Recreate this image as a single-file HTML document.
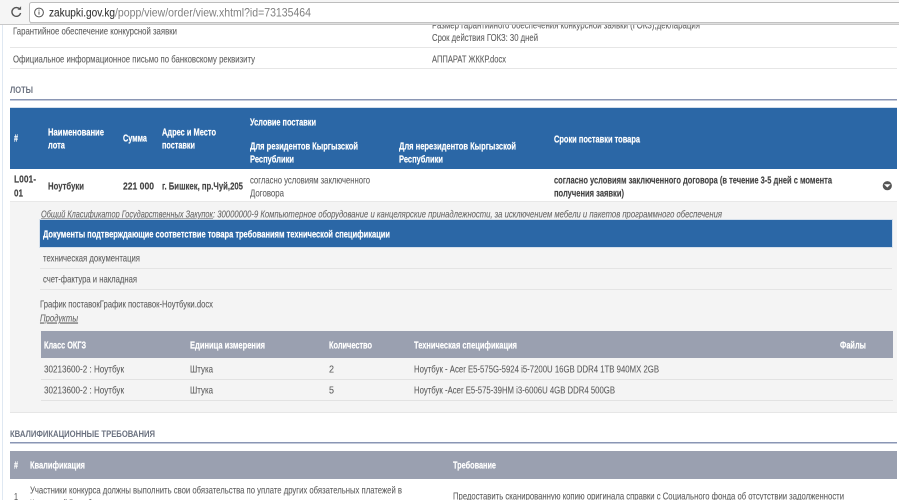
<!DOCTYPE html>
<html><head><meta charset="utf-8"><style>
html,body{margin:0;padding:0;background:#fff;width:899px;height:500px;overflow:hidden}
svg{display:block;position:absolute;left:0;top:0;filter:blur(.3px)}
text{font-family:"Liberation Sans",sans-serif;font-size:10.5px;fill:#5c5c5c;stroke:#5c5c5c;stroke-width:.08px}
.b{font-weight:bold;fill:#444;stroke:#444;stroke-width:.15px}
.w{font-weight:bold;fill:#fff;stroke:#fff;stroke-width:.2px}
.i{font-style:italic;fill:#666}
.u{text-decoration:underline}
</style></head><body>
<svg width="899" height="500" viewBox="0 0 899 500" xmlns="http://www.w3.org/2000/svg">
<rect x="2" y="25" width="1" height="475" fill="#dfe8f2"/>
<!-- clipped row text -->
<text x="432" y="28.5" textLength="268" lengthAdjust="spacingAndGlyphs">Размер гарантийного обеспечения конкурсной заявки (ГОКЗ),декларация</text>
<!-- chrome -->
<rect width="899" height="25" fill="#f5f5f5"/>
<rect x="29.5" y="2.5" width="880" height="20" rx="2" fill="#fff" stroke="#bdbdbd"/>
<rect x="0" y="24" width="899" height="1" fill="#c8c8c8"/>
<rect x="30" y="22.5" width="869" height="1" fill="#c8c8c8"/>
<path d="M20 9.5A4.4 4.4 0 1 0 20.6 13" fill="none" stroke="#555" stroke-width="1.4"/>
<path d="M17.5 9.8h3.6V6.2z" fill="#555"/>
<circle cx="39" cy="12.5" r="4.4" fill="none" stroke="#555" stroke-width="1"/>
<rect x="38.5" y="11.5" width="1" height="3.2" fill="#555"/><rect x="38.5" y="9.6" width="1" height="1" fill="#555"/>
<text x="49" y="16.5" textLength="66" lengthAdjust="spacingAndGlyphs" style="font-size:12px;fill:#333;stroke:#333">zakupki.gov.kg</text>
<text x="115" y="16.5" textLength="196" lengthAdjust="spacingAndGlyphs" style="font-size:12px;fill:#808080;stroke:none">/popp/view/order/view.xhtml?id=73135464</text>
<!-- top rows -->
<text x="13" y="34.5" textLength="164" lengthAdjust="spacingAndGlyphs">Гарантийное обеспечение конкурсной заявки</text>
<text x="432" y="41" textLength="106" lengthAdjust="spacingAndGlyphs">Срок действия ГОКЗ: 30 дней</text>
<rect x="10" y="47" width="887" height="1" fill="#e6e6e6"/>
<text x="13" y="62.5" textLength="242" lengthAdjust="spacingAndGlyphs">Официальное информационное письмо по банковскому реквизиту</text>
<text x="432" y="62.5" textLength="74" lengthAdjust="spacingAndGlyphs">АППАРАТ ЖККР.docx</text>
<rect x="10" y="68" width="887" height="1" fill="#e6e6e6"/>
<text x="10" y="93" textLength="23" lengthAdjust="spacingAndGlyphs" style="font-size:9.5px;font-weight:bold;fill:#6b7280;stroke:none">ЛОТЫ</text>
<rect x="10" y="99" width="887" height="1.5" fill="#8a96b4"/>
<!-- lots header -->
<rect x="10" y="107" width="887" height="1" fill="#d5e0ec"/>
<rect x="10" y="108" width="887" height="61" fill="#2b67a6"/>
<text class="w" x="14" y="141.5" textLength="4" lengthAdjust="spacingAndGlyphs">#</text>
<text class="w" x="48" y="135.5" textLength="56" lengthAdjust="spacingAndGlyphs">Наименование</text>
<text class="w" x="48" y="148.5" textLength="17" lengthAdjust="spacingAndGlyphs">лота</text>
<text class="w" x="123" y="141.5" textLength="24" lengthAdjust="spacingAndGlyphs">Сумма</text>
<text class="w" x="162" y="135.5" textLength="54" lengthAdjust="spacingAndGlyphs">Адрес и Место</text>
<text class="w" x="162" y="148.5" textLength="33" lengthAdjust="spacingAndGlyphs">поставки</text>
<text class="w" x="250" y="125.5" textLength="66" lengthAdjust="spacingAndGlyphs">Условие поставки</text>
<text class="w" x="250" y="149.5" textLength="108" lengthAdjust="spacingAndGlyphs">Для резидентов Кыргызской</text>
<text class="w" x="250" y="162.5" textLength="44" lengthAdjust="spacingAndGlyphs">Республики</text>
<text class="w" x="399" y="149.5" textLength="117" lengthAdjust="spacingAndGlyphs">Для нерезидентов Кыргызской</text>
<text class="w" x="399" y="162.5" textLength="44" lengthAdjust="spacingAndGlyphs">Республики</text>
<text class="w" x="554" y="142.5" textLength="86" lengthAdjust="spacingAndGlyphs">Сроки поставки товара</text>
<!-- lot row -->
<text class="b" x="14" y="182.5" textLength="22" lengthAdjust="spacingAndGlyphs">L001-</text>
<text class="b" x="14" y="196.5" textLength="9" lengthAdjust="spacingAndGlyphs">01</text>
<text class="b" x="48" y="189.5" textLength="36" lengthAdjust="spacingAndGlyphs">Ноутбуки</text>
<text class="b" x="123" y="189.5" textLength="31" lengthAdjust="spacingAndGlyphs">221 000</text>
<text class="b" x="162" y="189.5" textLength="81" lengthAdjust="spacingAndGlyphs">г. Бишкек, пр.Чуй,205</text>
<text x="250" y="183.5" textLength="120" lengthAdjust="spacingAndGlyphs">согласно условиям заключенного</text>
<text x="250" y="196.5" textLength="34" lengthAdjust="spacingAndGlyphs">Договора</text>
<text class="b" x="554" y="183.5" textLength="278" lengthAdjust="spacingAndGlyphs">согласно условиям заключенного договора (в течение 3-5 дней с момента</text>
<text class="b" x="554" y="196.5" textLength="70" lengthAdjust="spacingAndGlyphs">получения заявки)</text>
<circle cx="887.3" cy="185.7" r="4.6" fill="#555"/>
<path d="M884 184.3h6.6l-3.3 3.2z" fill="#fff"/>
<!-- panel -->
<rect x="10" y="202" width="887" height="210" fill="#f4f4f4"/>
<rect x="10" y="201" width="887" height="1" fill="#e8e8e8"/>
<rect x="10" y="412" width="887" height="1" fill="#e6e6e6"/>
<text class="i u" x="41" y="217.5" textLength="172" lengthAdjust="spacingAndGlyphs">Общий Класификатор Государственных Закупок</text>
<text class="i" x="213" y="217.5" textLength="509" lengthAdjust="spacingAndGlyphs">: 30000000-9 Компьютерное оборудование и канцелярские принадлежности, за исключением мебели и пакетов программного обеспечения</text>
<rect x="40" y="220" width="852" height="27" fill="#2b67a6"/>
<rect x="39.5" y="219.5" width="853" height="28" fill="none" stroke="#d5e0ec"/>
<text class="w" x="43" y="237.5" textLength="347" lengthAdjust="spacingAndGlyphs">Документы подтверждающие соответствие товара требованиям технической спецификации</text>
<text x="43" y="261.5" textLength="97" lengthAdjust="spacingAndGlyphs">техническая документация</text>
<rect x="40" y="268" width="852" height="1" fill="#e4e4e4"/>
<text x="43" y="282.5" textLength="94" lengthAdjust="spacingAndGlyphs">счет-фактура и накладная</text>
<rect x="40" y="289" width="852" height="1" fill="#e4e4e4"/>
<text x="40" y="307.5" textLength="173" lengthAdjust="spacingAndGlyphs">График поставокГрафик поставок-Ноутбуки.docx</text>
<text class="i u" x="40" y="321.5" textLength="38" lengthAdjust="spacingAndGlyphs">Продукты</text>
<rect x="41" y="331" width="852" height="27" fill="#9aa0b0"/>
<text class="w" x="44" y="348.5" textLength="42" lengthAdjust="spacingAndGlyphs">Класс ОКГЗ</text>
<text class="w" x="190" y="348.5" textLength="75" lengthAdjust="spacingAndGlyphs">Единица измерения</text>
<text class="w" x="329" y="348.5" textLength="43" lengthAdjust="spacingAndGlyphs">Количество</text>
<text class="w" x="414" y="348.5" textLength="103" lengthAdjust="spacingAndGlyphs">Техническая спецификация</text>
<text class="w" x="840" y="348.5" textLength="26" lengthAdjust="spacingAndGlyphs">Файлы</text>
<text x="44" y="372.5" textLength="80" lengthAdjust="spacingAndGlyphs">30213600-2 : Ноутбук</text>
<text x="190" y="372.5" textLength="23" lengthAdjust="spacingAndGlyphs">Штука</text>
<text x="329" y="372.5" textLength="5" lengthAdjust="spacingAndGlyphs">2</text>
<text x="414" y="372.5" textLength="245" lengthAdjust="spacingAndGlyphs">Ноутбук - Acer E5-575G-5924 i5-7200U 16GB DDR4 1TB 940MX 2GB</text>
<rect x="41" y="379" width="852" height="1" fill="#e2e2e2"/>
<text x="44" y="393.5" textLength="80" lengthAdjust="spacingAndGlyphs">30213600-2 : Ноутбук</text>
<text x="190" y="393.5" textLength="23" lengthAdjust="spacingAndGlyphs">Штука</text>
<text x="329" y="393.5" textLength="5" lengthAdjust="spacingAndGlyphs">5</text>
<text x="414" y="393.5" textLength="201" lengthAdjust="spacingAndGlyphs">Ноутбук -Acer E5-575-39HM i3-6006U 4GB DDR4 500GB</text>
<rect x="41" y="400" width="852" height="1" fill="#e2e2e2"/>
<!-- qualification -->
<text x="10" y="437" textLength="145" lengthAdjust="spacingAndGlyphs" style="font-size:9.5px;font-weight:bold;fill:#6b7280;stroke:none">КВАЛИФИКАЦИОННЫЕ ТРЕБОВАНИЯ</text>
<rect x="10" y="442" width="887" height="1.5" fill="#8a96b4"/>
<rect x="10" y="451" width="887" height="28" fill="#9aa0b0"/>
<text class="w" x="14" y="468.5" textLength="4" lengthAdjust="spacingAndGlyphs">#</text>
<text class="w" x="30" y="468.5" textLength="55" lengthAdjust="spacingAndGlyphs">Квалификация</text>
<text class="w" x="453" y="468.5" textLength="43" lengthAdjust="spacingAndGlyphs">Требование</text>
<text x="14" y="500" textLength="4" lengthAdjust="spacingAndGlyphs">1</text>
<text x="30" y="493.5" textLength="372" lengthAdjust="spacingAndGlyphs">Участники конкурса должны выполнить свои обязательства по уплате других обязательных платежей в</text>
<text x="30" y="506.5" textLength="76" lengthAdjust="spacingAndGlyphs">Кыргызской Республике</text>
<text x="453" y="499.5" textLength="391" lengthAdjust="spacingAndGlyphs">Предоставить сканированную копию оригинала справки с Социального фонда об отсутствии задолженности</text>
</svg>
</body></html>
